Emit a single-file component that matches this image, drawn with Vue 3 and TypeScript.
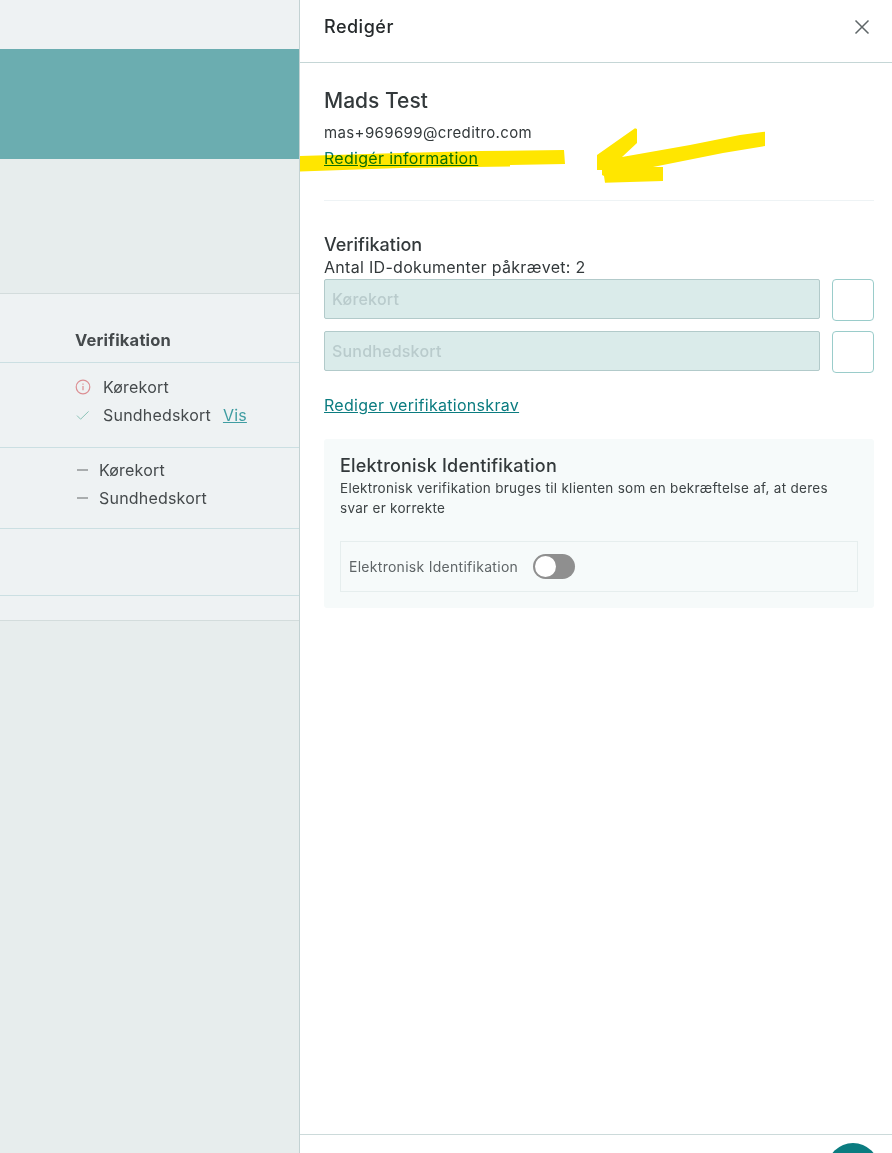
<script setup lang="ts">
const docs: string[] = ['Kørekort', 'Sundhedskort']
</script>

<template>
  <div class="page">
    <section class="back">
      <div class="strip"></div>
      <div class="banner"></div>
      <div class="gap"></div>
      <div class="table">
        <div class="head"><b>Verifikation</b></div>
        <div class="row first">
          <div class="item">
            <svg class="ico" viewBox="0 0 16 16" fill="none" stroke="#dc8f93" stroke-width="1.2">
              <circle cx="8" cy="8" r="6.8" />
              <path d="M8 7v4.2M8 4.6v1.1" />
            </svg>
            <span>Kørekort</span>
          </div>
          <div class="item">
            <svg class="ico" viewBox="0 0 16 16" fill="none" stroke="#8cc4b8" stroke-width="1">
              <path d="M2 8.6l3.6 3.6L13.6 4.4" />
            </svg>
            <span>Sundhedskort</span>
            <a class="vis">Vis</a>
          </div>
        </div>
        <div class="row second">
          <div v-for="d in docs" :key="d" class="item dash"><i></i><span>{{ d }}</span></div>
        </div>
        <div class="row empty"></div>
        <div class="row last"></div>
      </div>
    </section>

    <aside class="panel">
      <header class="top">
        <h2>Redigér</h2>
        <svg class="close" viewBox="0 0 16 16" fill="none" stroke="#5f6668" stroke-width="1.5">
          <path d="M1.5 1.5l13 13M14.5 1.5l-13 13" />
        </svg>
      </header>
      <div class="body">
        <div class="person">
          <h1>Mads Test</h1>
          <p class="mail">mas+969699@creditro.com</p>
          <a class="link">Redigér information</a>
        </div>
        <div class="verify">
          <h3>Verifikation</h3>
          <p class="count">Antal ID-dokumenter påkrævet: 2</p>
          <div v-for="d in docs" :key="d" class="field">
            <div class="input">{{ d }}</div>
            <div class="box"></div>
          </div>
          <a class="link edit">Rediger verifikationskrav</a>
        </div>
        <div class="card">
          <h3>Elektronisk Identifikation</h3>
          <p>Elektronisk verifikation bruges til klienten som en bekræftelse af, at deres svar er korrekte</p>
          <div class="toggle-row">
            <span>Elektronisk Identifikation</span>
            <div class="toggle"><i></i></div>
          </div>
        </div>
      </div>
      <footer class="foot"><div class="fab"></div></footer>
    </aside>

    <svg class="marker" viewBox="0 0 892 200" width="892" height="200">
      <path d="M300 156L400 153L480 151L564 150L565 164L510 165L510 166.500L400 168L300 171.500Z" />
      <path d="M635 128.300L637 129L637 143L622 157L690 145L740 135L765 131.700L765 146L723 153L653 167L663 167L663 181L605 182.700L604 176L602 175L602 170L597 170L597 155Z" />
    </svg>
  </div>
</template>

<style scoped>
.page {
  position: relative;
  display: flex;
  width: 892px;
  height: 1153px;
  overflow: hidden;
  font-family: Inter, "Noto Sans", sans-serif;
  color: #33393b;
}
.back {
  width: 299px;
  flex: none;
  background: #e7eded;
  font-size: 16px;
  letter-spacing: 0.2px;
  color: #454a4c;
}
.strip {
  height: 49px;
  background: #eef2f3;
}
.banner {
  height: 110px;
  background: #6badb0;
}
.gap {
  height: 134px;
}
.table {
  background: #eef2f3;
  border-top: 1px solid #d3dcdc;
  border-bottom: 1px solid #d3dcdc;
}
.head {
  height: 68px;
  padding: 0 0 0 75px;
  display: flex;
  align-items: center;
  border-bottom: 1px solid #cbdfe2;
}
.head b {
  font-weight: 700;
  font-size: 16.500px;
  position: relative;
  top: 12px;
}
.row {
  border-bottom: 1px solid #cbdfe2;
  padding-left: 76px;
}
.first {
  height: 85px;
  padding-top: 10px;
  box-sizing: border-box;
}
.second {
  height: 81px;
  padding-top: 8px;
  box-sizing: border-box;
}
.empty {
  height: 66px;
}
.last {
  height: 24px;
  border-bottom: 0;
}
.item {
  height: 28px;
  display: flex;
  align-items: center;
}
.ico {
  width: 16px;
  height: 16px;
  margin-left: -1px;
  margin-right: 12px;
  flex: none;
}
.vis {
  margin-left: 12px;
  color: #3f9da2;
  text-decoration: underline;
}
.dash i {
  width: 11px;
  height: 2px;
  background: #a9adae;
  margin-left: 1px;
  margin-right: 11px;
}
.panel {
  flex: 1;
  min-width: 0;
  display: flex;
  flex-direction: column;
  background: #fff;
  border-left: 1px solid #c3d2d3;
}
.top {
  height: 63px;
  flex: none;
  box-sizing: border-box;
  padding: 0 22px 9px 24px;
  display: flex;
  align-items: center;
  justify-content: space-between;
  border-bottom: 1px solid #c5d6d6;
}
.top h2 {
  margin: 0;
  font-size: 18px;
  letter-spacing: 0.5px;
  font-weight: 500;
  color: #25292b;
}
.close {
  width: 16px;
  height: 16px;
}
.body {
  flex: 1;
  padding: 0 18px 0 24px;
}
.person {
  height: 138px;
  box-sizing: border-box;
  padding-top: 25px;
  border-bottom: 1px solid #eef3f5;
}
.person h1 {
  margin: 0;
  font-size: 21px;
  line-height: 26px;
  font-weight: 500;
}
.mail {
  margin: 9px 0 0;
  font-size: 15px;
  letter-spacing: 0.37px;
  line-height: 20px;
}
.link {
  display: block;
  width: max-content;
  margin-top: 5px;
  font-size: 16px;
  letter-spacing: 0.3px;
  line-height: 20px;
  color: #0b7c80;
  text-decoration: underline;
}
.verify {
  padding-top: 33px;
}
.verify h3,
.card h3 {
  margin: 0;
  font-size: 18px;
  line-height: 22px;
  font-weight: 500;
}
.card h3 {
  letter-spacing: 0.2px;
}
.count {
  margin: 1px 0 2px;
  font-size: 16px;
  letter-spacing: 0.3px;
  line-height: 20px;
}
.field {
  display: flex;
  gap: 12px;
  margin-bottom: 10px;
  height: 42px;
}
.input {
  flex: 1;
  height: 40px;
  box-sizing: border-box;
  padding: 0 7px;
  line-height: 38px;
  font-size: 16px;
  letter-spacing: 0.2px;
  font-weight: 500;
  background: #daebea;
  border: 1px solid #b2caca;
  border-radius: 2px;
  color: #b9cbcc;
}
.box {
  width: 42px;
  height: 42px;
  box-sizing: border-box;
  background: #fff;
  border: 1px solid #9accca;
  border-radius: 4px;
}
.edit {
  margin-top: 22px;
}
.card {
  margin-top: 24px;
  height: 169px;
  box-sizing: border-box;
  padding: 16px 16px 0;
  background: #f6fafa;
  border-radius: 3px;
}
.card p {
  margin: 1px 0 0;
  font-size: 13.500px;
  letter-spacing: 0.28px;
  line-height: 20px;
  color: #3d4345;
}
.toggle-row {
  margin-top: 23px;
  height: 51px;
  box-sizing: border-box;
  padding: 0 8px;
  display: flex;
  align-items: center;
  gap: 14.500px;
  border: 1px solid #e6eeee;
  font-size: 14px;
  letter-spacing: 0.28px;
  color: #5f6567;
}
.toggle {
  width: 42px;
  height: 25px;
  box-sizing: border-box;
  padding: 2px;
  background: #8f8f8f;
  border-radius: 13px;
}
.toggle i {
  display: block;
  width: 21px;
  height: 21px;
  border-radius: 50%;
  background: #fff;
}
.foot {
  height: 18px;
  flex: none;
  position: relative;
  border-top: 1px solid #ccdada;
}
.fab {
  position: absolute;
  left: 527px;
  top: 8px;
  width: 52px;
  height: 52px;
  border-radius: 50%;
  background: #0b7c80;
}
.marker {
  position: absolute;
  left: 0;
  top: 0;
  fill: #ffe600;
  mix-blend-mode: multiply;
  pointer-events: none;
}
</style>
